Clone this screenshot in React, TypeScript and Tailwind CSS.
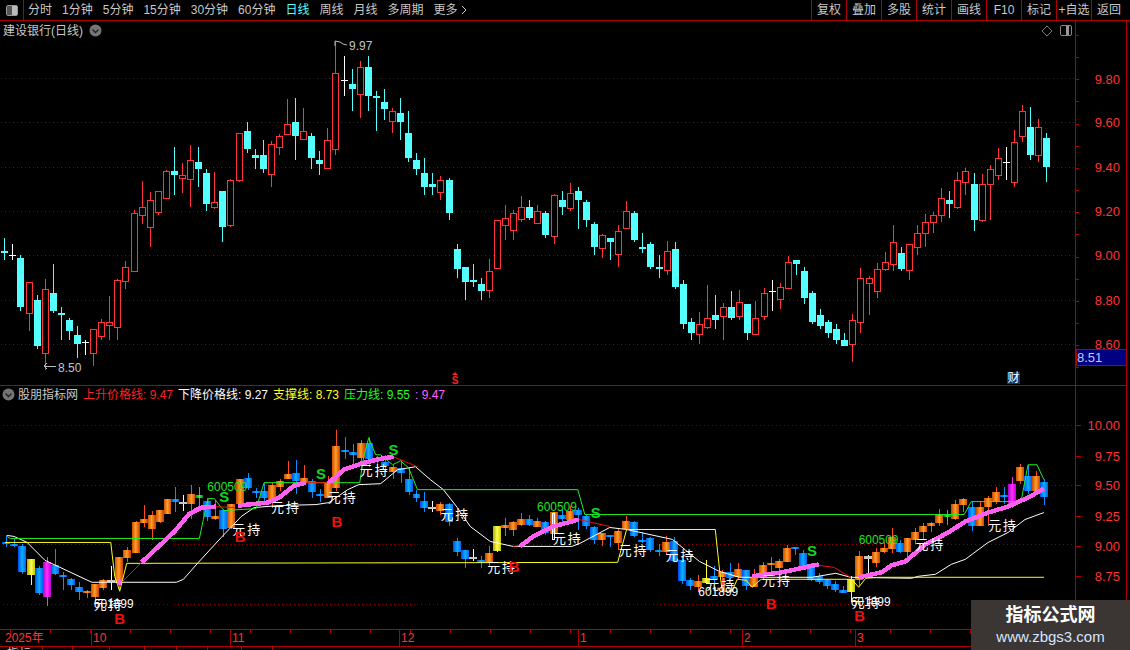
// 日线 K 线 + 指标副图
type Row = [number, number, number, number, string];

const raw: Row[] = [
  [595, 633, 638, 660, "d"], [612, 645, 647, 660, "w"], [645, 655, 800, 812, "d"], [727, 727, 820, 872, "u"],
  [766, 780, 917, 926, "d"], [717, 748, 940, 990, "u"], [672, 760, 812, 818, "d"], [800, 820, 824, 900, "d"],
  [835, 840, 872, 900, "d"], [858, 885, 911, 953, "d"], [900, 905, 907, 945, "w"], [868, 868, 940, 977, "u"],
  [838, 847, 887, 900, "u"], [768, 847, 854, 900, "u"], [718, 721, 860, 900, "u"], [663, 682, 722, 746, "u"],
  [510, 520, 694, 694, "u"], [423, 502, 526, 552, "u"], [456, 481, 562, 620, "u"], [454, 454, 515, 525, "u"],
  [390, 394, 475, 475, "u"], [321, 393, 405, 465, "d"], [370, 406, 415, 458, "u"], [315, 361, 416, 500, "u"],
  [321, 366, 386, 440, "d"], [388, 400, 491, 512, "d"], [396, 487, 502, 506, "u"], [453, 453, 560, 605, "d"],
  [418, 421, 554, 560, "u"], [280, 280, 421, 425, "u"], [246, 273, 326, 338, "d"], [327, 345, 353, 387, "d"],
  [300, 345, 386, 398, "d"], [304, 313, 401, 440, "u"], [282, 289, 322, 345, "u"],
  [178, 253, 281, 281, "u"], [175, 246, 288, 360, "d"], [205, 274, 296, 296, "u"], [280, 288, 353, 387, "d"],
  [333, 360, 372, 405, "d"], [265, 301, 384, 386, "u"], [5, 100, 328, 345, "u"], [48, 120, 122, 168, "w"],
  [87, 132, 147, 213, "d"], [64, 82, 161, 234, "u"], [48, 81, 167, 213, "d"], [153, 168, 174, 273, "d"],
  [147, 186, 207, 240, "d"], [205, 214, 242, 279, "u"], [175, 219, 246, 300, "d"], [213, 279, 354, 366, "d"],
  [339, 360, 387, 405, "d"], [354, 399, 441, 465, "d"], [400, 432, 441, 465, "d"], [408, 421, 455, 480, "u"],
  [414, 420, 518, 540, "d"], [612, 627, 687, 714, "d"], [681, 681, 726, 780, "d"], [672, 720, 726, 741, "d"],
  [714, 732, 753, 780, "d"], [657, 694, 749, 774, "u"], [540, 541, 683, 687, "u"], [495, 535, 554, 600, "u"],
  [510, 520, 569, 600, "u"], [468, 502, 536, 546, "u"], [480, 502, 534, 540, "d"], [495, 514, 548, 552, "u"],
  [514, 519, 585, 594, "d"], [462, 466, 587, 612, "u"],
  // 从这里开始 y 基准是 90
  [303, 330, 351, 375, "d"], [279, 310, 353, 363, "u"], [291, 303, 330, 417, "d"], [330, 336, 390, 411, "d"],
  [396, 402, 471, 495, "d"], [432, 436, 473, 504, "u"], [444, 444, 456, 510, "d"], [405, 424, 491, 531, "u"],
  [333, 364, 413, 413, "u"], [363, 369, 450, 456, "d"], [429, 471, 477, 489, "d"], [456, 462, 531, 537, "d"],
  [495, 531, 537, 564, "d"], [453, 484, 539, 555, "u"], [456, 477, 591, 597, "d"], [570, 582, 702, 717, "d"],
  [684, 696, 729, 750, "d"], [666, 703, 731, 762, "u"], [585, 685, 710, 717, "u"], [615, 675, 690, 717, "d"],
  [639, 652, 677, 750, "u"], [603, 651, 684, 690, "d"], [600, 637, 677, 690, "u"], [642, 642, 729, 750, "d"],
  [633, 685, 731, 735, "u"], [594, 610, 677, 690, "u"], [570, 603, 606, 663, "w"], [579, 592, 626, 657, "u"],
  [498, 517, 593, 597, "u"], [510, 510, 522, 555, "d"], [531, 543, 624, 642, "d"], [603, 609, 696, 702, "d"],
  [657, 675, 708, 717, "d"], [690, 696, 729, 744, "d"], [702, 717, 750, 762, "d"],
  [729, 750, 768, 768, "d"], [672, 691, 763, 816, "u"], [534, 565, 697, 729, "u"], [558, 565, 578, 675, "u"],
  [519, 538, 604, 624, "u"], [486, 517, 538, 543, "u"], [405, 457, 523, 543, "u"], [471, 489, 537, 543, "d"],
  [463, 463, 539, 570, "u"], [405, 430, 472, 496, "u"], [372, 397, 430, 471, "u"], [366, 376, 397, 429, "u"],
  [294, 325, 376, 396, "u"], [303, 330, 342, 384, "d"], [246, 271, 352, 356, "u"], [234, 244, 277, 315, "u"],
  [249, 282, 389, 423, "d"], [252, 283, 391, 396, "u"], [225, 238, 283, 390, "u"], [174, 205, 256, 270, "u"],
  [171, 216, 218, 270, "w"], [120, 157, 277, 291, "u"], [45, 64, 139, 156, "u"], [51, 111, 194, 210, "d"],
  [87, 112, 196, 216, "u"], [129, 144, 231, 276, "d"],
];

const candles = raw.map((r, i) => {
  const base = i < 69 ? 40 : 90;
  return {
    i,
    x: Math.round(4.33 + 8.077 * i),
    high: Math.round(base + r[0] / 3),
    top: Math.round(base + r[1] / 3),
    bottom: Math.round(base + r[2] / 3),
    low: Math.round(base + r[3] / 3),
    kind: r[4],
  };
});

// 副图和主图同一价格，只是比例不同
const toLower = (y: number) => Math.round(593.3 - (344.3 - y) * 0.5413);

const special: Record<number, string> = {
  3: "yellow", 61: "yellow", 87: "yellow", 105: "yellow",
  5: "magenta", 125: "magenta",
  24: "green", 117: "green",
  13: "white", 22: "white", 53: "white", 58: "white", 107: "white",
};

const fills: Record<string, string> = {
  orange: "url(#g-orange)", blue: "url(#g-blue)", yellow: "url(#g-yellow)",
  magenta: "url(#g-magenta)", green: "url(#g-green)", white: "#c8c8c8",
};
const wicks: Record<string, string> = {
  orange: "#ff4a18", blue: "#0a90ff", yellow: "#ffff30",
  magenta: "#ff30ff", green: "#10e020", white: "#ffffff",
};

const whiteLine = "5,536 12,537 25,543 43,561 90,583 175,583 182,580 197,563 220,538 240,517 253,508 277,506 315,505 328,503 347,490 358,485 380,484 397,470 415,467 430,480 443,490 457,508 470,527 490,542 513,547 572,547 580,544 610,528 627,530 673,540 700,562 720,572 740,578 750,578 813,578 837,574 852,578 913,579 920,577 937,575 953,565 967,560 990,543 1010,533 1027,520 1046,513";
const yellowLine = "3,543 109,543 113,577 118,592 125,564 618,563 627,530 716,530 721,577 723,592 733,592 738,580 747,581 753,588 762,580 853,580 860,588 867,579 880,578 1046,578";
const greenLine = "5,537 8,539 198,539 202,520 207,499 213,499 220,508 223,511 255,509 263,483 359,483 363,457 368,438 375,455 380,455 392,465 400,461 408,468 417,490 578,490 585,515 966,515 973,502 1023,502 1030,465 1039,465 1046,480";
const redLines = [
  "120,583 140,563", "213,507 233,508", "305,483 327,483", "393,457 417,467",
  "579,520 610,527", "513,547 520,546", "820,566 835,568 852,578",
];
const pinkLines = [
  "115,583 119,583",
  "140,563 173,532 188,514 200,508 215,507",
  "237,506 267,503 278,498 293,486 305,483",
  "327,484 343,470 360,464 380,459 393,457",
  "520,547 533,537 553,527 579,520",
  "753,577 783,573 820,565",
  "860,578 883,573 893,566 907,562 927,545 950,533 967,522 990,513 1010,507 1032,497 1046,489",
];

const holdLabels = [
  [92, 605], [231, 530], [270, 508], [327, 498], [359, 471], [440, 515], [487, 568], [553, 539],
  [619, 551], [666, 556], [707, 585], [763, 581], [853, 603], [917, 545], [990, 526],
];
const sellLabels = [[223, 497], [320, 474], [393, 450], [596, 513], [813, 551]];
const buyLabels = [[118, 619], [239, 537], [336, 522], [514, 567], [772, 604], [861, 616]];

const leftTabs = ["分时", "1分钟", "5分钟", "15分钟", "30分钟", "60分钟", "日线", "周线", "月线", "多周期"];
const rightTabs = ["复权", "叠加", "多股", "统计", "画线", "F10", "标记", "+自选", "返回"];

const upperPrices = [[9.8, 79], [9.6, 122], [9.4, 167], [9.2, 211], [9.0, 255], [8.8, 300], [8.6, 344]];
const lowerPrices = [["10.00", 425], ["9.75", 456], ["9.50", 485], ["9.25", 516], ["9.00", 546], ["8.75", 576]];
const months = [[91, "10"], [230, "11"], [399, "12"], [578, "1"], [742, "2"], [855, "3"]];
const bottomTabs = [
  { w: "w-[43px]", t: "指标" }, { w: "w-[30px]", t: "" }, { w: "w-[37px]", t: "+" }, { w: "w-[35px]", t: "" },
  { w: "w-[32px]", t: "" }, { w: "w-[31px]", t: "" }, { w: "w-[34px]", t: "" }, { w: "w-[31px]", t: "" },
];

function Chevron() {
  return (
    <svg width="13" height="13" viewBox="0 0 13 13" className="shrink-0">
      <circle cx="6.5" cy="6.5" r="6" fill="#757575" />
      <polyline points="3.5,5.5 6.5,8.5 9.5,5.5" fill="none" stroke="#222" strokeWidth="1.4" />
    </svg>
  );
}

function Grid({ ys }: { ys: number[] }) {
  return (
    <>
      {ys.map((y) => (
        <line key={y} x1="1" x2="1075" y1={y + 0.5} y2={y + 0.5} stroke="#8c0000" strokeDasharray="1 3" />
      ))}
    </>
  );
}

function UpperChart() {
  return (
    <svg width="1075" height="345" viewBox="0 40 1075 345" className="block" shapeRendering="crispEdges">
      <Grid ys={[78, 122, 167, 211, 255, 300, 344]} />
      {candles.map((c) => {
        if (c.kind === "w") {
          return (
            <g key={c.i} stroke="#fff">
              <line x1={c.x + 0.5} x2={c.x + 0.5} y1={c.high} y2={c.low} />
              <line x1={c.x - 3} x2={c.x + 4} y1={c.top + 0.5} y2={c.top + 0.5} />
            </g>
          );
        }
        const color = c.kind === "u" ? "#ff3434" : "#54ffff";
        return (
          <g key={c.i}>
            <line x1={c.x + 0.5} x2={c.x + 0.5} y1={c.high} y2={c.low} stroke={color} />
            {c.kind === "u" ? (
              <rect x={c.x - 2.5} y={c.top + 0.5} width="6" height={Math.max(c.bottom - c.top, 2)} fill="#000" stroke={color} />
            ) : (
              <rect x={c.x - 3} y={c.top} width="7" height={Math.max(c.bottom - c.top, 2)} fill={color} />
            )}
          </g>
        );
      })}
      <g shapeRendering="auto">
        <polyline points="335,46 335,41 340,42 343,44 347,45" fill="none" stroke="#bbb" />
        <text x="349" y="46" dominantBaseline="central" className="fill-[#c4c4c4] text-[12px]">9.97</text>
        <polyline points="47,363 44,366 47,369" fill="none" stroke="#bbb" />
        <line x1="44" x2="56" y1="366.5" y2="366.5" stroke="#bbb" />
        <text x="58" y="368" dominantBaseline="central" className="fill-[#c4c4c4] text-[12px]">8.50</text>
        <polygon points="455,372 452,375 458,375" fill="#ff2020" />
        <text x="455" y="380" textAnchor="middle" dominantBaseline="central" className="fill-[#ff2020] text-[10px] font-bold">S</text>
      </g>
      <rect x="1007" y="372" width="13" height="12" fill="#0a3a70" />
      <text x="1013.5" y="378" textAnchor="middle" dominantBaseline="central" shapeRendering="auto" className="fill-white text-[12px]">财</text>
    </svg>
  );
}

function LowerChart() {
  return (
    <svg width="1075" height="226" viewBox="0 404 1075 226" className="block" shapeRendering="crispEdges">
      <defs>
        <linearGradient id="g-orange"><stop offset="0" stopColor="#c84800" /><stop offset="0.5" stopColor="#ffa028" /><stop offset="1" stopColor="#d04000" /></linearGradient>
        <linearGradient id="g-blue"><stop offset="0" stopColor="#0050f0" /><stop offset="0.5" stopColor="#10b0ff" /><stop offset="1" stopColor="#0060f0" /></linearGradient>
        <linearGradient id="g-yellow"><stop offset="0" stopColor="#b0b000" /><stop offset="0.5" stopColor="#ffff50" /><stop offset="1" stopColor="#c8c800" /></linearGradient>
        <linearGradient id="g-magenta"><stop offset="0" stopColor="#b000c8" /><stop offset="0.5" stopColor="#ff30ff" /><stop offset="1" stopColor="#c000d8" /></linearGradient>
        <linearGradient id="g-green"><stop offset="0" stopColor="#008000" /><stop offset="0.5" stopColor="#30ff30" /><stop offset="1" stopColor="#008000" /></linearGradient>
      </defs>
      <Grid ys={[425, 485, 545, 605]} />
      {candles.map((c) => {
        const name = special[c.i] ?? (c.kind === "u" ? "orange" : c.kind === "d" ? "blue" : c.i === 10 || c.i === 95 ? "orange" : "blue");
        const top = toLower(c.top);
        return (
          <g key={c.i}>
            <line x1={c.x + 0.5} x2={c.x + 0.5} y1={toLower(c.high)} y2={toLower(c.low)} stroke={wicks[name]} />
            <rect x={c.x - 4} y={top} width="8" height={Math.max(toLower(c.bottom) - top, 2)} fill={fills[name]} />
          </g>
        );
      })}
      <rect x="552.5" y="513.5" width="2" height="27" fill="none" stroke="#fff" />
      <g fill="none" strokeLinejoin="round">
        <polyline points={whiteLine} stroke="#fff" />
        <polyline points={yellowLine} stroke="#ffff20" />
        <polyline points={greenLine} stroke="#20f020" />
        {redLines.map((p) => <polyline key={p} points={p} stroke="#f01010" />)}
        {pinkLines.map((p) => <polyline key={p} points={p} stroke="#ff60f0" strokeWidth="4.5" />)}
      </g>
      <g shapeRendering="auto">
        {[[206, 487], [537, 507], [860, 541]].map(([x, y]) => (
          <text key={x} x={x} y={y} dominantBaseline="central" className="fill-[#20e020] text-[12px]">600509</text>
        ))}
        {[[92, 605], [699, 593], [852, 603]].map(([x, y]) => (
          <text key={x} x={x} y={y} dominantBaseline="central" className="fill-white text-[12px]">601899</text>
        ))}
        {holdLabels.map(([x, y]) => (
          <text key={x} x={x} y={y} dominantBaseline="central" className="fill-white text-[13px] tracking-[2px]">元持</text>
        ))}
        {sellLabels.map(([x, y]) => (
          <text key={x} x={x} y={y} textAnchor="middle" dominantBaseline="central" className="fill-[#10d820] text-[15px] font-bold">S</text>
        ))}
        {buyLabels.map(([x, y]) => (
          <text key={x} x={x} y={y} textAnchor="middle" dominantBaseline="central" className="fill-[#f01010] text-[15px] font-bold">B</text>
        ))}
      </g>
    </svg>
  );
}

function TimeAxis() {
  return (
    <svg width="1075" height="16" viewBox="0 631 1075 16" className="block" shapeRendering="crispEdges">
      {Array.from({ length: 27 }, (_, k) => 40 * k + 10).map((x) => (
        <line key={x} x1={x + 0.5} x2={x + 0.5} y1="631" y2="634" stroke="#b00000" />
      ))}
      {months.map(([x, t]) => (
        <g key={t}>
          <line x1={Number(x) + 0.5} x2={Number(x) + 0.5} y1="631" y2="647" stroke="#b00000" />
          <text x={Number(x) + 2} y="639" dominantBaseline="central" shapeRendering="auto" className="fill-[#ff3434] text-[12px]">{t}</text>
        </g>
      ))}
      <text x="5" y="639" dominantBaseline="central" shapeRendering="auto" className="fill-[#ff3434] text-[12px]">2025年</text>
    </svg>
  );
}

function UpperAxis() {
  return (
    <svg width="50" height="364" viewBox="1076 21 50 364" className="block" shapeRendering="crispEdges">
      {Array.from({ length: 16 }, (_, k) => 35 + 22.15 * k).map((y) => (
        <line key={y} x1="1076" x2="1079" y1={Math.round(y) + 0.5} y2={Math.round(y) + 0.5} stroke="#b00000" />
      ))}
      {upperPrices.map(([p, y]) => (
        <text key={p} x="1120" y={y} textAnchor="end" dominantBaseline="central" shapeRendering="auto" className="fill-[#ff3434] text-[13px]">{p.toFixed(2)}</text>
      ))}
      <rect x="1076" y="349.5" width="50" height="16" fill="#000080" stroke="#b00000" />
      <text x="1077" y="357" dominantBaseline="central" shapeRendering="auto" className="fill-[#c8c8ff] text-[13px]">8.51</text>
    </svg>
  );
}

function LowerAxis() {
  return (
    <svg width="50" height="244" viewBox="1076 386 50 244" className="block" shapeRendering="crispEdges">
      {[425, 456, 485, 516, 546, 576, 606].map((y) => (
        <line key={y} x1="1076" x2="1081" y1={y + 0.5} y2={y + 0.5} stroke="#b00000" />
      ))}
      {lowerPrices.map(([p, y]) => (
        <text key={p} x="1120" y={y} textAnchor="end" dominantBaseline="central" shapeRendering="auto" className="fill-[#ff3434] text-[13px]">{p}</text>
      ))}
    </svg>
  );
}

export default function App() {
  return (
    <div className="relative w-[1130px] h-[650px] overflow-hidden bg-black text-[12px] leading-none text-[#c8c8c8] font-['Liberation_Sans','Noto_Sans_CJK_SC',sans-serif]">
      {/* 顶部工具栏 */}
      <div className="flex h-[21px] border-b border-[#b00000]">
        <div className="flex w-[24px] items-center justify-center border-r border-[#b00000]">
          <div className="flex h-[11px] w-[12px] rounded-[2px] border border-[#999]">
            <div className="w-[5px] bg-[#555]" />
            <div className="flex-1 bg-[#bbb]" />
          </div>
        </div>
        <div className="ml-[4px] flex items-center gap-[10px]">
          {leftTabs.map((t) => (
            <span key={t} className={t === "日线" ? "text-[#54ffff]" : ""}>{t}</span>
          ))}
          <span className="flex items-center">
            更多
            <svg width="7" height="10" viewBox="0 0 7 10" className="ml-[3px]">
              <polyline points="1,1 5,5 1,9" fill="none" stroke="#c8c8c8" />
            </svg>
          </span>
        </div>
        <div className="ml-auto mr-[4px] flex">
          {rightTabs.map((t) => (
            <div key={t} className="flex w-[35px] items-center justify-center border-l border-[#b00000] whitespace-nowrap">{t}</div>
          ))}
        </div>
      </div>

      <div className="flex h-[629px]">
        <div className="flex w-[1076px] flex-col border-r border-[#b00000]">
          {/* 主图 */}
          <div className="border-b border-[#b00000]">
            <div className="flex h-[19px] items-center pl-[3px]">
              <span className="mr-[6px]">建设银行(日线)</span>
              <Chevron />
              <span className="ml-auto flex items-center gap-[7px] pr-[3px]">
                <svg width="12" height="12" viewBox="0 0 12 12">
                  <polygon points="6,1 11,6 6,11 1,6" fill="none" stroke="#777" />
                </svg>
                <span className="flex h-[11px] w-[12px] rounded-[2px] border border-[#888]">
                  <span className="w-[5px]" />
                  <span className="w-[3px] bg-[#999]" />
                </span>
              </span>
            </div>
            <UpperChart />
          </div>

          {/* 副图 */}
          <div className="flex h-[18px] items-center whitespace-pre pl-[2px]">
            <Chevron />
            <span className="ml-[3px] w-[65px]">股朋指标网</span>
            <span className="w-[95px] text-[#ff2020]">上升价格线: 9.47</span>
            <span className="w-[95px] text-white">下降价格线: 9.27</span>
            <span className="w-[71px] text-[#ffff20]">支撑线: 8.73</span>
            <span className="w-[71px] text-[#20ff20]">压力线: 9.55</span>
            <span className="text-[#ff60ff]">: 9.47</span>
          </div>
          <LowerChart />

          {/* 时间轴 */}
          <div className="border-y border-[#b00000]">
            <TimeAxis />
          </div>
          <div className="flex h-[3px] overflow-hidden">
            {bottomTabs.map((b, k) => (
              <div key={k} className={`${b.w} border-r border-[#b00000] pl-[7px] pt-[1px]`}>{b.t}</div>
            ))}
          </div>
        </div>

        <div className="flex w-[51px] flex-col border-r border-[#b00000]">
          <div className="border-b border-[#b00000]">
            <UpperAxis />
          </div>
          <LowerAxis />
        </div>
      </div>

      {/* 水印 */}
      <div className="absolute bottom-0 right-0 flex h-[50px] w-[159px] flex-col items-center justify-center gap-[5px] bg-[#3b3634]">
        <span className="text-[18px] font-bold text-white">指标公式网</span>
        <span className="text-[15px] text-[#d4e4ff]">www.zbgs3.com</span>
      </div>
    </div>
  );
}
